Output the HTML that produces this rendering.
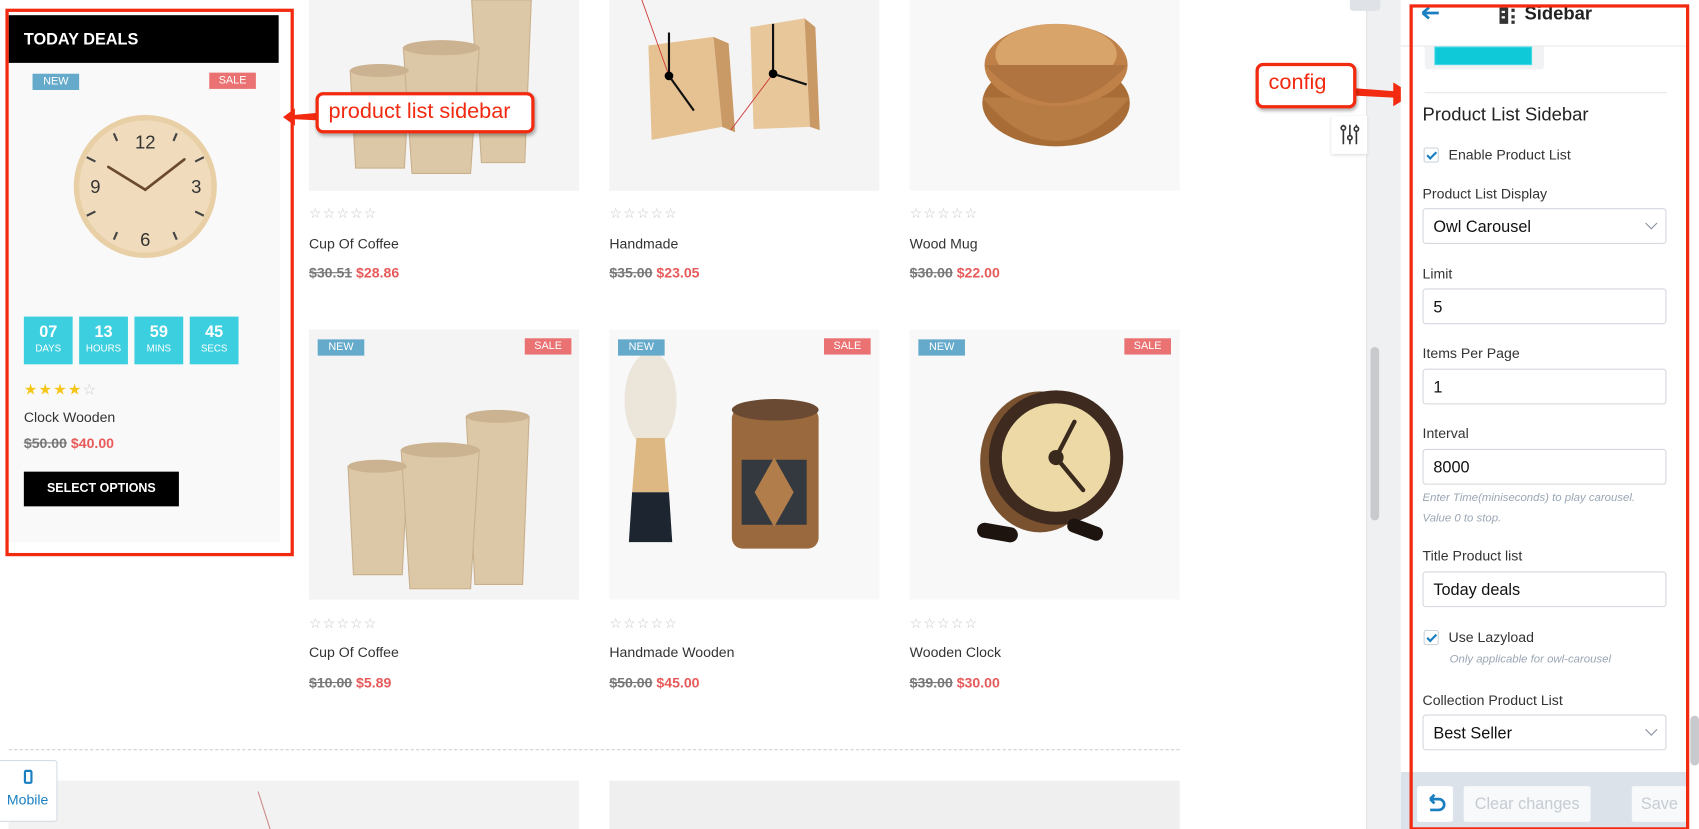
<!DOCTYPE html>
<html><head><meta charset="utf-8">
<style>
*{box-sizing:border-box;margin:0;padding:0}
html,body{width:1699px;height:829px;overflow:hidden;background:#fff;font-family:"Liberation Sans",sans-serif}
#w{position:absolute;left:0;top:0;width:1567px;height:765px;transform:scale(1.08424);transform-origin:0 0;overflow:hidden}
.a{position:absolute}
.img{position:absolute;background:#f4f4f4;overflow:hidden}
.badge{position:absolute;color:#fff;font-size:10px;text-align:center;line-height:15px;height:15px;width:43px}
.new{background:#66aacb}.sale{background:#ea7272}
.stars{position:absolute;color:#c8c8c8;font-size:13px;letter-spacing:1px}
.nm{position:absolute;font-size:13px;color:#333}
.pr{position:absolute;font-size:13px;font-weight:bold}
.pr s{color:#777}.pr b{color:#e85a5a}
.cd{position:absolute;top:292px;width:45px;height:44px;background:#3ccfdf;color:#fff;text-align:center}
.cd b{display:block;font-size:15px;margin-top:6px}
.cd span{display:block;font-size:9px;margin-top:1px}
.lbl{position:absolute;left:1312px;font-size:13px;color:#333}
.inp{position:absolute;left:1312px;width:225px;height:33px;border:1px solid #d3d8de;border-radius:3px;font-size:15px;color:#111;padding:8px 9px}
.chev{position:absolute;right:9px;top:9px;width:8px;height:8px;border-right:1.5px solid #8a94a0;border-bottom:1.5px solid #8a94a0;transform:rotate(45deg)}
.help{position:absolute;font-size:10.5px;font-style:italic;color:#9aa6b4}
.cb{position:absolute;left:1313px;width:14px;height:14px;border:1px solid #ccd3da;border-radius:2px}
.cb:after{content:"";position:absolute;left:4px;top:1px;width:3px;height:7px;border-right:2px solid #1a7fc1;border-bottom:2px solid #1a7fc1;transform:rotate(45deg)}
.ann{position:absolute;border:3px solid #f22a10;border-radius:7px;background:#fff;color:#f22a10;font-size:20px;box-shadow:1px 2px 3px rgba(0,0,0,.3)}
</style></head><body><div id="w">

<!-- left deals card -->
<div class="a" style="left:8px;top:14px;width:250px;height:486px;background:#f9f9f9"></div>
<div class="a" style="left:8px;top:14px;width:249px;height:44px;background:#000;color:#fff;font-weight:bold;font-size:15px;padding:14px 14px">TODAY DEALS</div>
<div class="badge new" style="left:30px;top:68px">NEW</div>
<div class="badge sale" style="left:193px;top:67px">SALE</div>
<svg class="a" style="left:60px;top:100px" width="150" height="150" viewBox="0 0 150 150">
<circle cx="74" cy="72" r="66" fill="#e8cfa6"/><circle cx="74" cy="72" r="61" fill="#f0dcbc"/>
<text x="74" y="37" font-size="17" text-anchor="middle" fill="#333" font-family="Liberation Sans">12</text>
<text x="121" y="78" font-size="17" text-anchor="middle" fill="#333" font-family="Liberation Sans">3</text>
<text x="74" y="127" font-size="17" text-anchor="middle" fill="#333" font-family="Liberation Sans">6</text>
<text x="28" y="78" font-size="17" text-anchor="middle" fill="#333" font-family="Liberation Sans">9</text>
<g stroke="#444" stroke-width="2"><line x1="45" y1="23" x2="48" y2="30"/><line x1="103" y1="23" x2="100" y2="30"/><line x1="20" y1="45" x2="28" y2="49"/><line x1="128" y1="45" x2="120" y2="49"/><line x1="20" y1="99" x2="28" y2="95"/><line x1="128" y1="99" x2="120" y2="95"/><line x1="45" y1="121" x2="48" y2="114"/><line x1="103" y1="121" x2="100" y2="114"/></g>
<g stroke="#6b4a2e" stroke-width="2.5" stroke-linecap="round"><line x1="74" y1="75" x2="40" y2="54"/><line x1="74" y1="75" x2="110" y2="47"/></g>
</svg>
<div class="cd" style="left:22px"><b>07</b><span>DAYS</span></div>
<div class="cd" style="left:73px"><b>13</b><span>HOURS</span></div>
<div class="cd" style="left:124px"><b>59</b><span>MINS</span></div>
<div class="cd" style="left:175px"><b>45</b><span>SECS</span></div>
<div class="stars" style="left:22px;top:351px;color:#f5c518;font-size:14px">★★★★<span style="color:#ccc">☆</span></div>
<div class="nm" style="left:22px;top:377px">Clock Wooden</div>
<div class="pr" style="left:22px;top:401px"><s>$50.00</s> <b>$40.00</b></div>
<div class="a" style="left:22px;top:435px;width:143px;height:32px;background:#000;color:#fff;font-weight:bold;font-size:11.5px;text-align:center;line-height:32px">SELECT OPTIONS</div>
<div class="a" style="left:5px;top:8px;width:266px;height:505px;border:3px solid #f22a10"></div>

<!-- row 1 -->
<div class="img" style="left:285px;top:0;width:249px;height:176px">
<svg width="249" height="176"><g fill="#dcc7a6" stroke="#c8b08c"><path d="M150 0h55l-6 150h-40z"/><path d="M38 65h55l-5 90h-45z"/><path d="M87 44h70l-8 116h-54z"/></g><ellipse cx="122" cy="44" rx="35" ry="7" fill="#cbb291"/><ellipse cx="65" cy="65" rx="27" ry="6" fill="#cbb291"/></svg></div>
<div class="img" style="left:562px;top:0;width:249px;height:176px">
<svg width="249" height="176"><path d="M36 42l60-8 8 83-65 12z" fill="#e6c293"/><path d="M96 34l14 6 6 82-12-5z" fill="#c99a66"/><path d="M130 25l50-8 5 100-52 2z" fill="#e8c79b"/><path d="M180 17l10 8 4 95-9-3z" fill="#c99a66"/><g stroke="#111" stroke-width="2"><line x1="55" y1="30" x2="55" y2="70"/><line x1="55" y1="70" x2="78" y2="102"/><line x1="151" y1="22" x2="151" y2="68"/><line x1="151" y1="68" x2="182" y2="78"/></g><g stroke="#c33" stroke-width=".8"><line x1="30" y1="0" x2="55" y2="70"/><line x1="151" y1="68" x2="112" y2="120"/></g><circle cx="55" cy="70" r="4"/><circle cx="151" cy="68" r="4"/></svg></div>
<div class="img" style="left:839px;top:0;width:249px;height:176px;background:#f8f8f8">
<svg width="249" height="176"><ellipse cx="135" cy="95" rx="68" ry="40" fill="#a86d36"/><path d="M67 90q68 80 136 0" fill="#b77c43"/><ellipse cx="135" cy="60" rx="66" ry="38" fill="#c08149"/><ellipse cx="135" cy="50" rx="56" ry="28" fill="#d9a46a"/><path d="M69 60q66 70 132 0" fill="#b07440"/></svg></div>
<div class="stars" style="left:285px;top:189px">☆☆☆☆☆</div><div class="nm" style="left:285px;top:217px">Cup Of Coffee</div><div class="pr" style="left:285px;top:244px"><s>$30.51</s> <b>$28.86</b></div>
<div class="stars" style="left:562px;top:189px">☆☆☆☆☆</div><div class="nm" style="left:562px;top:217px">Handmade</div><div class="pr" style="left:562px;top:244px"><s>$35.00</s> <b>$23.05</b></div>
<div class="stars" style="left:839px;top:189px">☆☆☆☆☆</div><div class="nm" style="left:839px;top:217px">Wood Mug</div><div class="pr" style="left:839px;top:244px"><s>$30.00</s> <b>$22.00</b></div>

<!-- row 2 -->
<div class="img" style="left:285px;top:304px;width:249px;height:249px">
<svg width="249" height="249"><g fill="#dcc7a6" stroke="#c8b08c"><path d="M145 80h58l-6 155h-44z"/><path d="M36 126h55l-5 100h-45z"/><path d="M85 111h72l-8 128h-56z"/></g><ellipse cx="121" cy="111" rx="36" ry="7" fill="#cbb291"/><ellipse cx="63" cy="126" rx="27" ry="6" fill="#cbb291"/><ellipse cx="174" cy="80" rx="29" ry="6" fill="#cbb291"/></svg></div>
<div class="img" style="left:562px;top:304px;width:249px;height:249px;background:#f8f8f8">
<svg width="249" height="249"><ellipse cx="38" cy="65" rx="24" ry="44" fill="#ece6da"/><path d="M25 100h26l4 50h-34z" fill="#ddb882"/><path d="M21 150h34l3 46h-40z" fill="#1d2530"/><rect x="113" y="72" width="80" height="130" rx="10" fill="#9a6a3e"/><ellipse cx="153" cy="74" rx="40" ry="10" fill="#6a4a33"/><path d="M122 120h60v60h-60z" fill="#34393f"/><path d="M152 118l18 32-18 32-18-32z" fill="#b07d4b"/></svg></div>
<div class="img" style="left:839px;top:304px;width:249px;height:249px;background:#f8f8f8">
<svg width="249" height="249"><ellipse cx="120" cy="122" rx="55" ry="65" fill="#7a5230"/><circle cx="135" cy="118" r="62" fill="#3e2a1e"/><circle cx="135" cy="118" r="50" fill="#ecd9a6"/><g stroke="#3a2a1e" stroke-width="4" stroke-linecap="round"><line x1="135" y1="118" x2="152" y2="85"/><line x1="135" y1="118" x2="160" y2="148"/></g><circle cx="135" cy="118" r="7" fill="#3a2a1e"/><g fill="#1d1410"><rect x="62" y="180" width="38" height="14" rx="7" transform="rotate(10 80 187)"/><rect x="145" y="178" width="34" height="13" rx="6" transform="rotate(20 162 184)"/></g></svg></div>
<div class="badge new" style="left:293px;top:313px">NEW</div><div class="badge sale" style="left:484px;top:312px">SALE</div>
<div class="badge new" style="left:570px;top:313px">NEW</div><div class="badge sale" style="left:760px;top:312px">SALE</div>
<div class="badge new" style="left:847px;top:313px">NEW</div><div class="badge sale" style="left:1037px;top:312px">SALE</div>
<div class="stars" style="left:285px;top:567px">☆☆☆☆☆</div><div class="nm" style="left:285px;top:594px">Cup Of Coffee</div><div class="pr" style="left:285px;top:622px"><s>$10.00</s> <b>$5.89</b></div>
<div class="stars" style="left:562px;top:567px">☆☆☆☆☆</div><div class="nm" style="left:562px;top:594px">Handmade Wooden</div><div class="pr" style="left:562px;top:622px"><s>$50.00</s> <b>$45.00</b></div>
<div class="stars" style="left:839px;top:567px">☆☆☆☆☆</div><div class="nm" style="left:839px;top:594px">Wooden Clock</div><div class="pr" style="left:839px;top:622px"><s>$39.00</s> <b>$30.00</b></div>

<div class="a" style="left:8px;top:691px;width:1080px;border-top:1px dashed #ccc"></div>
<div class="img" style="left:8px;top:720px;width:526px;height:60px;background:#f2f2f2"><svg width="526" height="60"><line x1="230" y1="10" x2="246" y2="60" stroke="#c88" stroke-width="1"/></svg></div>
<div class="img" style="left:562px;top:720px;width:526px;height:60px;background:#efefef"></div>
<div class="a" style="left:-2px;top:701px;width:55px;height:57px;background:#fff;border:1px solid #d5dde5;border-radius:3px;text-align:center;color:#1a7fc1;font-size:13px">
<div style="margin:8px auto 0;width:8px;height:13px;border:2px solid #1a7fc1;border-radius:2px"></div><div style="margin-top:7px">Mobile</div></div>

<!-- annotation product list sidebar -->
<svg class="a" style="left:258px;top:96px" width="40" height="24"><path d="M36 8L14 10 14 4 3 12 14 20 14 14 36 15z" fill="#f22a10"/></svg>
<div class="ann" style="left:291px;top:85px;width:202px;height:38px;padding:4px 9px">product list sidebar</div>

<!-- middle strip -->
<div class="a" style="left:1260px;top:0;width:32px;height:765px;background:#eef0f2;border-left:1px solid #e2e5e8"></div>
<div class="a" style="left:1264px;top:320px;width:8px;height:160px;background:#c8cacd;border-radius:4px"></div>
<div class="a" style="left:1245px;top:0;width:28px;height:10px;background:#dfe3e7;border-radius:0 0 3px 3px"></div>
<div class="a" style="left:1228px;top:107px;width:33px;height:35px;background:#fff;box-shadow:0 1px 3px rgba(0,0,0,.15)">
<svg width="33" height="35"><g stroke="#333" stroke-width="1.5" fill="none"><line x1="11" y1="8" x2="11" y2="26"/><line x1="17" y1="8" x2="17" y2="26"/><line x1="23" y1="8" x2="23" y2="26"/><circle cx="11" cy="11" r="2" fill="#fff"/><circle cx="17" cy="20" r="2" fill="#fff"/><circle cx="23" cy="12" r="2" fill="#fff"/></g></svg></div>

<!-- config annotation -->
<svg class="a" style="left:1245px;top:73px" width="62" height="28"><path d="M0 8L40 11 40 3 58 14 40 25 40 17 0 15z" fill="#f22a10"/></svg>
<div class="ann" style="left:1158px;top:58px;width:93px;height:42px;padding:4px 9px">config</div>

<!-- right panel -->
<div class="a" style="left:1292px;top:0;width:275px;height:765px;background:#fff"></div>
<svg class="a" style="left:1310px;top:5px" width="20" height="14"><path d="M2 7h15M2 7l6-5M2 7l6 5" stroke="#1a7fc1" stroke-width="2.5" fill="none"/></svg>
<svg class="a" style="left:1382px;top:6px" width="18" height="18"><rect x="1" y="1" width="8" height="15" fill="#333"/><rect x="3" y="4" width="3" height="2" fill="#fff"/><rect x="3" y="9" width="3" height="2" fill="#fff"/><rect x="12" y="2" width="3" height="3" fill="#333"/><rect x="12" y="8" width="3" height="3" fill="#333"/><rect x="12" y="13" width="3" height="3" fill="#333"/></svg>
<div class="a" style="left:1406px;top:3px;font-size:17px;font-weight:bold;color:#222">Sidebar</div>
<div class="a" style="left:1292px;top:42px;width:265px;border-top:1px solid #e5e8eb"></div>
<div class="a" style="left:1314px;top:43px;width:110px;height:21px;background:#f0f2f4;border-radius:0 0 3px 3px"></div>
<div class="a" style="left:1323px;top:43px;width:90px;height:17px;background:#0fc8d8;border:1px solid #3fd8e4"></div>
<div class="a" style="left:1314px;top:85px;width:223px;border-top:1px solid #e5e8eb"></div>
<div class="a" style="left:1312px;top:96px;font-size:17px;color:#222">Product List Sidebar</div>
<div class="cb" style="top:136px"></div><div class="lbl" style="left:1336px;top:135px">Enable Product List</div>
<div class="lbl" style="top:171px">Product List Display</div>
<div class="inp" style="top:192px">Owl Carousel<div class="chev"></div></div>
<div class="lbl" style="top:245px">Limit</div>
<div class="inp" style="top:266px">5</div>
<div class="lbl" style="top:318px">Items Per Page</div>
<div class="inp" style="top:340px">1</div>
<div class="lbl" style="top:392px">Interval</div>
<div class="inp" style="top:414px">8000</div>
<div class="help" style="left:1312px;top:453px">Enter Time(miniseconds) to play carousel.</div>
<div class="help" style="left:1312px;top:472px">Value 0 to stop.</div>
<div class="lbl" style="top:505px">Title Product list</div>
<div class="inp" style="top:527px">Today deals</div>
<div class="cb" style="top:581px"></div><div class="lbl" style="left:1336px;top:580px">Use Lazyload</div>
<div class="help" style="left:1337px;top:602px">Only applicable for owl-carousel</div>
<div class="lbl" style="top:638px">Collection Product List</div>
<div class="inp" style="top:659px">Best Seller<div class="chev"></div></div>
<div class="a" style="left:1559px;top:660px;width:8px;height:46px;background:#c8cacd;border-radius:4px"></div>
<div class="a" style="left:1292px;top:712px;width:265px;height:53px;background:#dce2e9"></div>
<div class="a" style="left:1307px;top:725px;width:33px;height:33px;background:#fff;border-radius:2px"><svg width="33" height="33"><path d="M12 12h8a5 5 0 0 1 0 10h-8M12 12l4-4M12 12l4 4" stroke="#1a7fc1" stroke-width="2.5" fill="none"/></svg></div>
<div class="a" style="left:1350px;top:725px;width:117px;height:33px;background:#f7f9fa;border-radius:2px;color:#c5ccd3;font-size:15px;text-align:center;line-height:33px">Clear changes</div>
<div class="a" style="left:1505px;top:725px;width:51px;height:33px;background:#f7f9fa;border-radius:2px;color:#c5ccd3;font-size:15px;text-align:center;line-height:33px">Save</div>
<div class="a" style="left:1300px;top:4px;width:258px;height:762px;border:3px solid #f22a10"></div>
</div></body></html>
